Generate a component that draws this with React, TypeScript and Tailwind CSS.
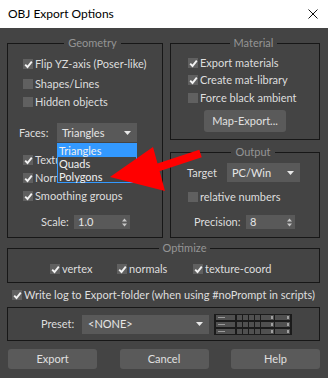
import React from "react";

const font = { fontFamily: 'Lato, "Noto Sans", sans-serif' };

function Check({ checked }: { checked?: boolean }) {
  return (
    <span className="w-[10px] h-[10px] bg-[#606060] flex items-center justify-center shrink-0">
      {checked && (
        <svg width="9" height="9" viewBox="0 0 9 9">
          <path d="M1.2 4.6 L3.5 7 L7.8 1.6" fill="none" stroke="#f2f2f2" strokeWidth="1.9" />
        </svg>
      )}
    </span>
  );
}

function CheckRow({
  label,
  checked,
  className = "",
}: {
  label: string;
  checked?: boolean;
  className?: string;
}) {
  return (
    <div className={`flex items-center gap-[2px] h-[16px] ${className}`}>
      <Check checked={checked} />
      <span className="whitespace-nowrap">{label}</span>
    </div>
  );
}

function Arrow() {
  return (
    <svg width="7" height="4" viewBox="0 0 7 4" className="shrink-0">
      <path d="M0 0 H7 L3.5 4 Z" fill="#e8e8e8" />
    </svg>
  );
}

function Dropdown({ value, className = "" }: { value: string; className?: string }) {
  return (
    <div className={`h-[19px] bg-[#595959] flex items-center justify-between pl-[5px] pr-[6px] ${className}`}>
      <span className="text-[#e6e6e6]">{value}</span>
      <Arrow />
    </div>
  );
}

function Spinner({ value, className = "" }: { value: string; className?: string }) {
  return (
    <div className={`h-[14px] bg-[#595959] flex items-center justify-between pl-[4px] pr-[3px] ${className}`}>
      <span className="text-[#e6e6e6]">{value}</span>
      <svg width="5" height="9" viewBox="0 0 5 9" className="shrink-0">
        <path d="M0 3.5 L2.5 0.5 L5 3.5 Z M0 5.5 L2.5 8.5 L5 5.5 Z" fill="#c8c8c8" />
      </svg>
    </div>
  );
}

function Group({
  title,
  className = "",
  children,
}: {
  title: string;
  className?: string;
  children: React.ReactNode;
}) {
  return (
    <fieldset className={`border border-[#171717] ${className}`}>
      <legend className="mx-auto px-[4px] text-[#959595] leading-[14px]">{title}</legend>
      {children}
    </fieldset>
  );
}

function PresetIcon() {
  const rows = [1, 8, 15];
  return (
    <svg width="78" height="21" viewBox="0 0 78 21" className="shrink-0">
      <rect x="0" y="0" width="78" height="21" fill="#1b1b1b" />
      {rows.map((y) => (
        <g key={y}>
          <rect x="2" y={y} width="19" height="5" fill="#505050" />
          <rect x="4" y={y + 2} width="7" height="1" fill="#9a9a9a" />
          <rect x="23" y={y} width="5" height="5" fill="#505050" />
          <rect x="29" y={y} width="5" height="5" fill="#505050" />
          <rect x="35" y={y} width="5" height="5" fill="#505050" />
          <rect x="41" y={y} width="5" height="5" fill="#505050" />
          <rect x="47" y={y} width="13" height="5" fill="#505050" />
          <rect x="57" y={y + 1} width="2" height="3" fill="#a0a0a0" />
          <rect x="61" y={y} width="15" height="5" fill="#505050" />
          <rect x="73" y={y + 1} width="2" height="3" fill="#a0a0a0" />
        </g>
      ))}
    </svg>
  );
}

export default function App() {
  return (
    <div
      className="relative w-[328px] h-[378px] bg-[#444444] text-[11px] leading-[14px] text-[#dedede] overflow-hidden"
      style={font}
    >
      {/* title bar */}
      <div className="h-[28px] bg-white flex items-center justify-between pl-[8px] pr-[10px]">
        <span className="text-[12px] text-black">OBJ Export Options</span>
        <svg width="10" height="10" viewBox="0 0 10 10">
          <path d="M0.5 0.5 L9.5 9.5 M9.5 0.5 L0.5 9.5" stroke="#111" strokeWidth="1" />
        </svg>
      </div>

      <div className="pl-[7px] pr-[8px] pt-[8px] flex flex-col">
        <div className="flex gap-[7px]">
          {/* Geometry */}
          <Group title="Geometry" className="w-[156px] pl-[15px] pb-[8px]">
            <CheckRow label="Flip YZ-axis (Poser-like)" checked className="mt-[6px]" />
            <CheckRow label="Shapes/Lines" className="mt-[4px]" />
            <CheckRow label="Hidden objects" className="mt-[2px]" />
            <div className="flex items-center mt-[13px] -ml-[4px]">
              <span className="w-[38px]">Faces:</span>
              <Dropdown value="Triangles" className="w-[80px]" />
            </div>
            <CheckRow label="Texture coordinates" checked className="mt-[10px]" />
            <CheckRow label="Normals" checked className="mt-[2px]" />
            <CheckRow label="Smoothing groups" checked className="mt-[2px]" />
            <div className="flex items-center mt-[11px] ml-[18px]">
              <span className="w-[33px]">Scale:</span>
              <Spinner value="1.0" className="w-[56px]" />
            </div>
          </Group>

          <div className="flex flex-col w-[150px]">
            {/* Material */}
            <Group title="Material" className="pl-[17px] pb-[7px]">
              <CheckRow label="Export materials" checked className="mt-[5px]" />
              <CheckRow label="Create mat-library" checked className="mt-[1px]" />
              <CheckRow label="Force black ambient" className="mt-[2px]" />
              <button className="mt-[4px] ml-[16px] w-[82px] h-[22px] bg-[#5a5a5a] rounded-[3px] text-[#e0e0e0]">
                Map-Export...
              </button>
            </Group>

            {/* Output */}
            <Group title="Output" className="mt-[5px] pl-[16px] pb-[8px] flex-1">
              <div className="flex items-center mt-[4px]">
                <span className="w-[40px]">Target</span>
                <Dropdown value="PC/Win" className="w-[73px]" />
              </div>
              <CheckRow label="relative numbers" className="mt-[7px] ml-[1px]" />
              <div className="flex items-center mt-[10px] ml-[7px]">
                <span className="w-[52px]">Precision:</span>
                <Spinner value="8" className="w-[49px]" />
              </div>
            </Group>
          </div>
        </div>

        {/* Optimize */}
        <Group title="Optimize" className="mt-[3px] pb-[5px] pl-[42px]">
          <div className="flex mt-[6px]">
            <CheckRow label="vertex" checked className="w-[67px]" />
            <CheckRow label="normals" checked className="w-[76px]" />
            <CheckRow label="texture-coord" checked />
          </div>
        </Group>

        <CheckRow
          label="Write log to Export-folder (when using #noPrompt in scripts)"
          checked
          className="mt-[4px] ml-[5px]"
        />

        {/* Preset */}
        <div className="mt-[4px] h-[34px] border border-[#171717] flex items-center pl-[33px]">
          <span className="w-[41px]">Preset:</span>
          <Dropdown value="<NONE>" className="w-[127px] pl-[6px]" />
          <div className="ml-[5px]">
            <PresetIcon />
          </div>
        </div>

        {/* buttons */}
        <div className="mt-[8px] ml-[1px] flex justify-between">
          <button className="w-[89px] h-[20px] bg-[#5a5a5a] rounded-[3px] text-[#e0e0e0]">Export</button>
          <button className="w-[89px] h-[20px] bg-[#5a5a5a] rounded-[3px] text-[#e0e0e0]">Cancel</button>
          <button className="w-[89px] h-[20px] bg-[#5a5a5a] rounded-[3px] text-[#e0e0e0]">Help</button>
        </div>
      </div>

      {/* open dropdown list */}
      <div className="absolute left-[57px] top-[143px] w-[80px] border border-[#3399ff] bg-[#444444] text-[#f0f0f0] leading-[13px]">
        <div className="bg-[#3399ff] pl-[1px] h-[13px]">Triangles</div>
        <div className="pl-[1px] h-[13px]">Quads</div>
        <div className="pl-[1px] h-[12px]">Polygons</div>
      </div>

      {/* red annotation arrow */}
      <svg className="absolute left-0 top-0 pointer-events-none" width="328" height="378" viewBox="0 0 328 378">
        <path d="M158 167.5 L200.5 153.5" stroke="#ff0000" strokeWidth="8" />
        <path d="M110 177 L153 147 L165 191 Z" fill="#ff0000" />
      </svg>
    </div>
  );
}
